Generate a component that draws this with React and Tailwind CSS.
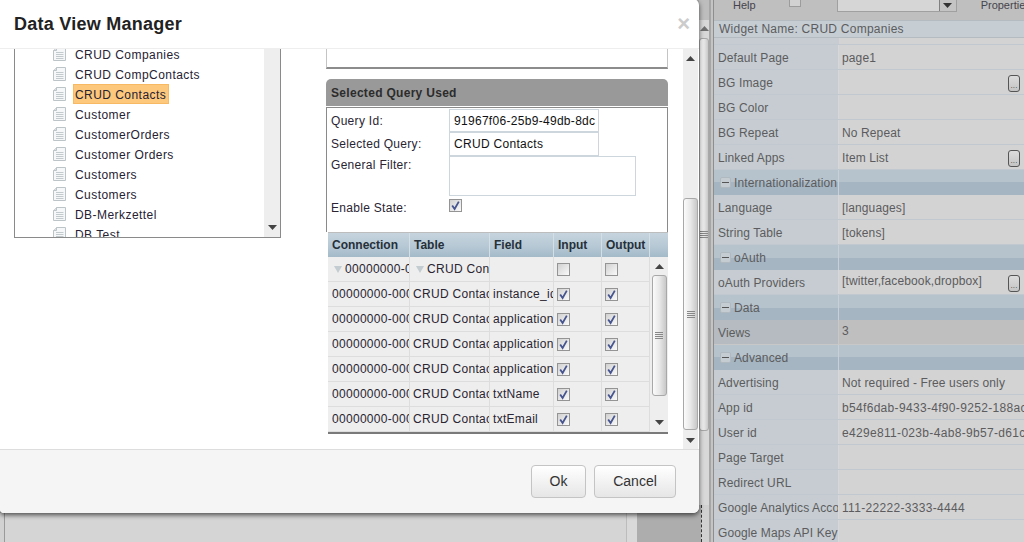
const FONT = "font-['Liberation_Sans',Arial,sans-serif]";

function Up({ className = "" }) {
  return <svg width="9" height="5" viewBox="0 0 9 5" className={className}><path d="M4.5 0 9 5H0z" fill="#444" /></svg>;
}
function Down({ className = "", color = "#444" }) {
  return <svg width="9" height="5" viewBox="0 0 9 5" className={className}><path d="M0 0h9L4.5 5z" fill={color} /></svg>;
}
function Grip() {
  return <div className="flex flex-col gap-[1px]"><div className="w-[8px] h-[1px] bg-[#888]" /><div className="w-[8px] h-[1px] bg-[#888]" /><div className="w-[8px] h-[1px] bg-[#888]" /><div className="w-[8px] h-[1px] bg-[#888]" /></div>;
}
function Thumb({ className = "" }) {
  return (
    <div className={`flex items-center justify-center rounded-[3px] border border-[#a8a8a8] bg-gradient-to-r from-[#fbfbfb] via-[#e8e8e8] to-[#c8c8c8] ${className}`}>
      <Grip />
    </div>
  );
}
function DocIcon() {
  return (
    <svg width="13" height="14" viewBox="0 0 13 14" className="shrink-0">
      <path d="M3.5.5h9v13H.5V3.5z" fill="#f6f7f8" stroke="#bcc4c8" />
      <path d="M3.5.5v3h-3" fill="#dfe3e5" stroke="#bcc4c8" />
      <path d="M3 5.5h7.5M3 7.5h7.5M3 9.5h7.5M3 11.5h7.5" stroke="#c2cace" />
    </svg>
  );
}
function Check({ checked = true }) {
  return (
    <svg width="13" height="13" viewBox="0 0 13 13" className="shrink-0">
      <defs>
        <linearGradient id="cb" x1="0" y1="0" x2="1" y2="1"><stop offset="0" stopColor="#cfcfcf" /><stop offset="1" stopColor="#fcfcfc" /></linearGradient>
      </defs>
      <rect x=".5" y=".5" width="12" height="12" fill="url(#cb)" stroke="#949494" />
      {checked && <path d="M3.2 6.4 5.6 10 9.8 2.6" fill="none" stroke="#46558f" strokeWidth="1.8" />}
    </svg>
  );
}
function Dots() {
  return (
    <div className="w-[12px] h-[17px] mt-[2px] mr-[4px] ml-auto shrink-0 rounded-[3px] border border-[#555] bg-gradient-to-b from-[#dcdcdc] to-[#c4c4c4] flex items-end justify-center text-[8px] leading-[10px] text-[#444]">...</div>
  );
}

const tree = ["CRUD Companies", "CRUD CompContacts", "CRUD Contacts", "Customer", "CustomerOrders", "Customer Orders", "Customers", "Customers", "DB-Merkzettel", "DB Test"];

function Tree() {
  return (
    <div className="ml-[14px] w-[267px] h-[189px] flex border-x border-b border-[#8a8a8a] overflow-hidden">
      <div className="flex-1 min-w-0 -mt-[5px] tracking-[0.45px] text-[#262233]">
        {tree.map((t, i) => (
          <div key={i} className="h-[20px] flex items-center pl-[38px] shrink-0">
            <DocIcon />
            <span className={i === 2 ? "ml-[7px] h-[20px] pl-[1px] pr-[2px] pt-[1px] flex items-center bg-[#fdc77c] border border-[#f7b964]" : "ml-[9px] pt-[1px]"}>{t}</span>
          </div>
        ))}
      </div>
      <div className="w-[16px] bg-[#eeeeee] flex flex-col items-center justify-end pb-[7px]"><Down /></div>
    </div>
  );
}

const cols = ["w-[82px]", "w-[80px]", "w-[64px]", "w-[48px]", "w-[48px]"];
const rows = ["instance_id", "application_id", "application_id", "application_id", "txtName", "txtEmail"];

function Cell({ w, children, className = "" }) {
  return <div className={`${w} h-full shrink-0 overflow-hidden whitespace-nowrap border-r border-[#dddddd] flex items-center ${className}`}>{children}</div>;
}

function Tri() {
  return <svg width="8" height="7" viewBox="0 0 8 7" className="shrink-0 mr-[3px]"><path d="M0 0h8L4 7z" fill="#c3ccd0" /></svg>;
}

function DataGrid() {
  return (
    <div className="w-[340px] ml-[2px] border-t border-b-2 border-t-[#bdbdbd] border-b-[#7a7a7a] tracking-[0.3px] text-[#2a2530]">
      <div className="h-[24px] flex bg-gradient-to-b from-[#c6d4de] via-[#b8cad6] to-[#a4bac9] font-bold text-[#26303a] tracking-normal">
        {["Connection", "Table", "Field", "Input", "Output"].map((h, i) => (
          <div key={h} className={`${cols[i]} h-full shrink-0 border-r border-[#d4dee5] flex items-center pl-[4px]`}>{h}</div>
        ))}
      </div>
      <div className="flex bg-[#eeeeee]">
        <div className="flex flex-col w-[322px] shrink-0">
          <div className="h-[25px] flex border-b border-[#dddddd]">
            <Cell w={cols[0]} className="pl-[6px]"><Tri />00000000-0000</Cell>
            <Cell w={cols[1]} className="pl-[6px]"><Tri />CRUD Contacts</Cell>
            <Cell w={cols[2]} />
            <Cell w={cols[3]} className="pl-[3px]"><Check checked={false} /></Cell>
            <Cell w={cols[4]} className="pl-[3px]"><Check checked={false} /></Cell>
          </div>
          {rows.map((r, i) => (
            <div key={i} className="h-[25px] flex border-b border-[#dddddd]">
              <Cell w={cols[0]} className="pl-[4px]">00000000-0000-0000</Cell>
              <Cell w={cols[1]} className="pl-[3px]">CRUD Contacts</Cell>
              <Cell w={cols[2]} className="pl-[3px]">{r}</Cell>
              <Cell w={cols[3]} className="pl-[3px]"><Check /></Cell>
              <Cell w={cols[4]} className="pl-[3px]"><Check /></Cell>
            </div>
          ))}
        </div>
        <div className="flex-1 flex flex-col items-center pt-[7px] pb-[7px]">
          <Up />
          <Thumb className="w-[15px] h-[121px] mt-[6px]" />
          <div className="flex-1" />
          <Down />
        </div>
      </div>
    </div>
  );
}

function RightCol() {
  return (
    <div className="w-[342px] flex flex-col">
      <div className="h-[20px] border-x border-[#c4c4c4] border-b-2 border-b-[#8c8c8c] bg-white" />
      <div className="mt-[10px] h-[27px] bg-[#999999] rounded-t-[5px] flex items-center pl-[5px] font-bold text-[#2c2c2c] tracking-[0.3px]">Selected Query Used</div>
      <div className="mt-[1px] border-x border-[#8a8a8a] border-t border-t-[#8a8a8a] flex flex-col h-[125px]">
        <div className="flex h-[24px] items-center pt-[1px]">
          <div className="w-[122px] pl-[4px] tracking-[0.3px]">Query Id:</div>
          <div className="w-[150px] h-[23px] border border-[#cdd6dc] flex items-center pl-[4px] text-[#111] tracking-[0.3px] overflow-hidden whitespace-nowrap">91967f06-25b9-49db-8dc</div>
        </div>
        <div className="flex h-[24px] items-center">
          <div className="w-[122px] pl-[4px] tracking-[0.3px]">Selected Query:</div>
          <div className="w-[150px] h-[24px] border border-[#cdd6dc] flex items-center pl-[4px] text-[#111] tracking-[0.3px]">CRUD Contacts</div>
        </div>
        <div className="flex h-[40px]">
          <div className="w-[122px] pl-[4px] tracking-[0.3px]">General Filter:</div>
          <div className="w-[187px] h-[40px] border border-[#cdd6dc]" />
        </div>
        <div className="flex mt-[3px]">
          <div className="w-[122px] pl-[4px] tracking-[0.3px]">Enable State:</div>
          <Check />
        </div>
      </div>
      <DataGrid />
    </div>
  );
}

function Modal() {
  return (
    <div className="absolute left-0 -top-[1px] w-[699px] h-[514px] bg-white rounded-r-[6px] rounded-bl-[4px] shadow-[0_2px_5px_rgba(0,0,0,0.65)] flex flex-col overflow-hidden text-[#2a2533]">
      <div className="h-[50px] shrink-0 border-b border-[#eeeeee] flex items-center pl-[14px] pr-[9px]">
        <div className="text-[18px] font-bold text-[#222222] tracking-[0.25px] pt-[1px]">Data View Manager</div>
        <div className="ml-auto text-[22px] font-bold text-[#cccccc] leading-none">×</div>
      </div>
      <div className="h-[400px] shrink-0 flex">
        <div className="w-[281px] shrink-0"><Tree /></div>
        <div className="ml-[45px]"><RightCol /></div>
        <div className="ml-[15px] w-[15px] bg-[#eeeeee] flex flex-col items-center pt-[7px] pb-[6px]">
          <Up />
          <div className="h-[137px]" />
          <Thumb className="w-[15px] h-[232px]" />
          <div className="flex-1" />
          <Down />
        </div>
      </div>
      <div className="flex-1 bg-[#f5f5f5] border-t border-[#dddddd] flex items-start justify-end pt-[15px] pr-[23px] gap-[8px] text-[14px] text-[#333333]">
        <div className="w-[55px] h-[33px] rounded-[4px] border border-[#c4c4c4] bg-gradient-to-b from-white to-[#e6e6e6] flex items-center justify-center">Ok</div>
        <div className="w-[82px] h-[33px] rounded-[4px] border border-[#c4c4c4] bg-gradient-to-b from-white to-[#e6e6e6] flex items-center justify-center">Cancel</div>
      </div>
    </div>
  );
}

const props = [
  { l: "Default Page", v: "page1" },
  { l: "BG Image", v: "", b: true },
  { l: "BG Color", v: "" },
  { l: "BG Repeat", v: "No Repeat" },
  { l: "Linked Apps", v: "Item List", b: true },
  { g: "Internationalization" },
  { l: "Language", v: "[languages]" },
  { l: "String Table", v: "[tokens]" },
  { g: "oAuth" },
  { l: "oAuth Providers", v: "[twitter,facebook,dropbox]", b: true, up: true },
  { g: "Data" },
  { l: "Views", v: "3", dark: true, up: true },
  { g: "Advanced" },
  { l: "Advertising", v: "Not required - Free users only" },
  { l: "App id", v: "b54f6dab-9433-4f90-9252-188ac", id: true },
  { l: "User id", v: "e429e811-023b-4ab8-9b57-d61c", id: true },
  { l: "Page Target", v: "" },
  { l: "Redirect URL", v: "" },
  { l: "Google Analytics Acco", v: "111-22222-3333-4444", id: true },
  { l: "Google Maps API Key", v: "" },
];

function PropRow({ p }) {
  if (p.g) {
    return (
      <div className="h-[25px] shrink-0 flex bg-[linear-gradient(#b7c3cc_0%,#b7c3cc_50%,#a5b5c1_50%,#a5b5c1_100%)]">
        <div className="w-[125px] shrink-0 flex items-center pl-[6px] border-r border-[#c6d0d7] overflow-hidden whitespace-nowrap">
          <div className="w-[11px] h-[11px] rounded-[2px] bg-[#c6cdd2] border border-[#b0b9c0] flex items-center justify-center mr-[3px] shrink-0"><div className="w-[7px] h-[1px] bg-[#555]" /></div>
          <span className="pt-[1px]">{p.g}</span>
        </div>
      </div>
    );
  }
  return (
    <div className={`h-[25px] shrink-0 flex border-b ${p.dark ? "border-[#c8c8c8]" : "border-[#c2c8d0]"}`}>
      <div className={`w-[125px] shrink-0 flex items-center pl-[4px] pt-[1px] overflow-hidden whitespace-nowrap border-r ${p.dark ? "bg-[#b5bbc0] border-[#c8c8c8]" : "bg-[#c6ccd1] border-[#d5d8da]"}`}>{p.l}</div>
      <div className={`flex-1 min-w-0 flex items-center pl-[3px] whitespace-nowrap overflow-hidden ${p.dark ? "bg-[#bfbfbf]" : "bg-[#d3d3d3]"}`}>
        <span className={`${p.up ? "-mt-[3px]" : "pt-[1px]"} ${p.id ? "tracking-[0.32px]" : ""}`}>{p.v}</span>
        {p.b && <Dots />}
      </div>
    </div>
  );
}

export default function App() {
  return (
    <div className={`relative w-[1024px] h-[542px] overflow-hidden flex bg-[#adadad] text-[12px] ${FONT}`}>
      <div className="w-[637px] shrink-0 pt-[513px] flex">
        <div className="w-[4px] bg-[#d2d2d2]" />
        <div className="flex-1 bg-[#d5d5d5] border-x border-x-[#9a9a9a] border-r-[#bcbcbc]" />
        <div className="w-[10px] bg-[#d9d9d9]" />
      </div>
      <div className="w-[62px] shrink-0 bg-[#adadad]" />
      <div className="w-[10px] shrink-0 flex flex-col">
        <div className="h-[20px] bg-[#bdbdbd]" />
        <div className="h-[485px] bg-[#d8d8d8] flex flex-col items-center pt-[6px]">
          <Up className="opacity-70" />
          <Thumb className="w-[10px] h-[393px] mt-[7px]" />
        </div>
        <div className="flex-1 flex">
          <div className="w-[2px] bg-[#adadad]" />
          <div className="flex-1 border-l border-dashed border-[#333] bg-[#d0d0d0]" />
        </div>
      </div>
      <div className="w-[5px] shrink-0 flex">
        <div className="w-[2px] bg-[#a6a6a6]" />
        <div className="w-[2px] bg-[#c4c4c4]" />
        <div className="w-[1px] bg-[#8e8e8e]" />
      </div>
      <div className="flex-1 min-w-0 flex flex-col text-[#5c5c5e] tracking-[0.12px]">
        <div className="h-[20px] shrink-0 bg-[#bfbfbf] flex items-start overflow-hidden text-[11px] text-[#44444c] tracking-normal whitespace-nowrap">
          <span className="ml-[19px] -mt-[3px] shrink-0">Help</span>
          <div className="ml-[33px] -mt-[2px] w-[12px] h-[9px] shrink-0 border border-[#9c9c9c] bg-[#d2d2d2]" />
          <div className="ml-[36px] -mt-[2px] w-[120px] h-[14px] shrink-0 border border-[#a0a0a0] bg-[#d6d6d6] flex justify-end">
            <div className="w-[17px] h-full border-l border-[#808080] bg-[#c4c4c4] flex items-center justify-center"><Down color="#333" /></div>
          </div>
          <span className="ml-[24px] -mt-[3px] shrink-0">Properties</span>
        </div>
        <div className="h-[18px] shrink-0 bg-[#c6ced4] flex items-center pl-[5px] border-y border-[#b4bcc2] tracking-[0.25px]">Widget Name: CRUD Companies</div>
        <div className="h-[7px] shrink-0 flex border-b border-[#c2c8d0]">
          <div className="w-[125px] bg-[#c6ccd1]" />
          <div className="flex-1 bg-[#d3d3d3]" />
        </div>
        {props.map((p, i) => <PropRow key={i} p={p} />)}
      </div>
      <Modal />
    </div>
  );
}
